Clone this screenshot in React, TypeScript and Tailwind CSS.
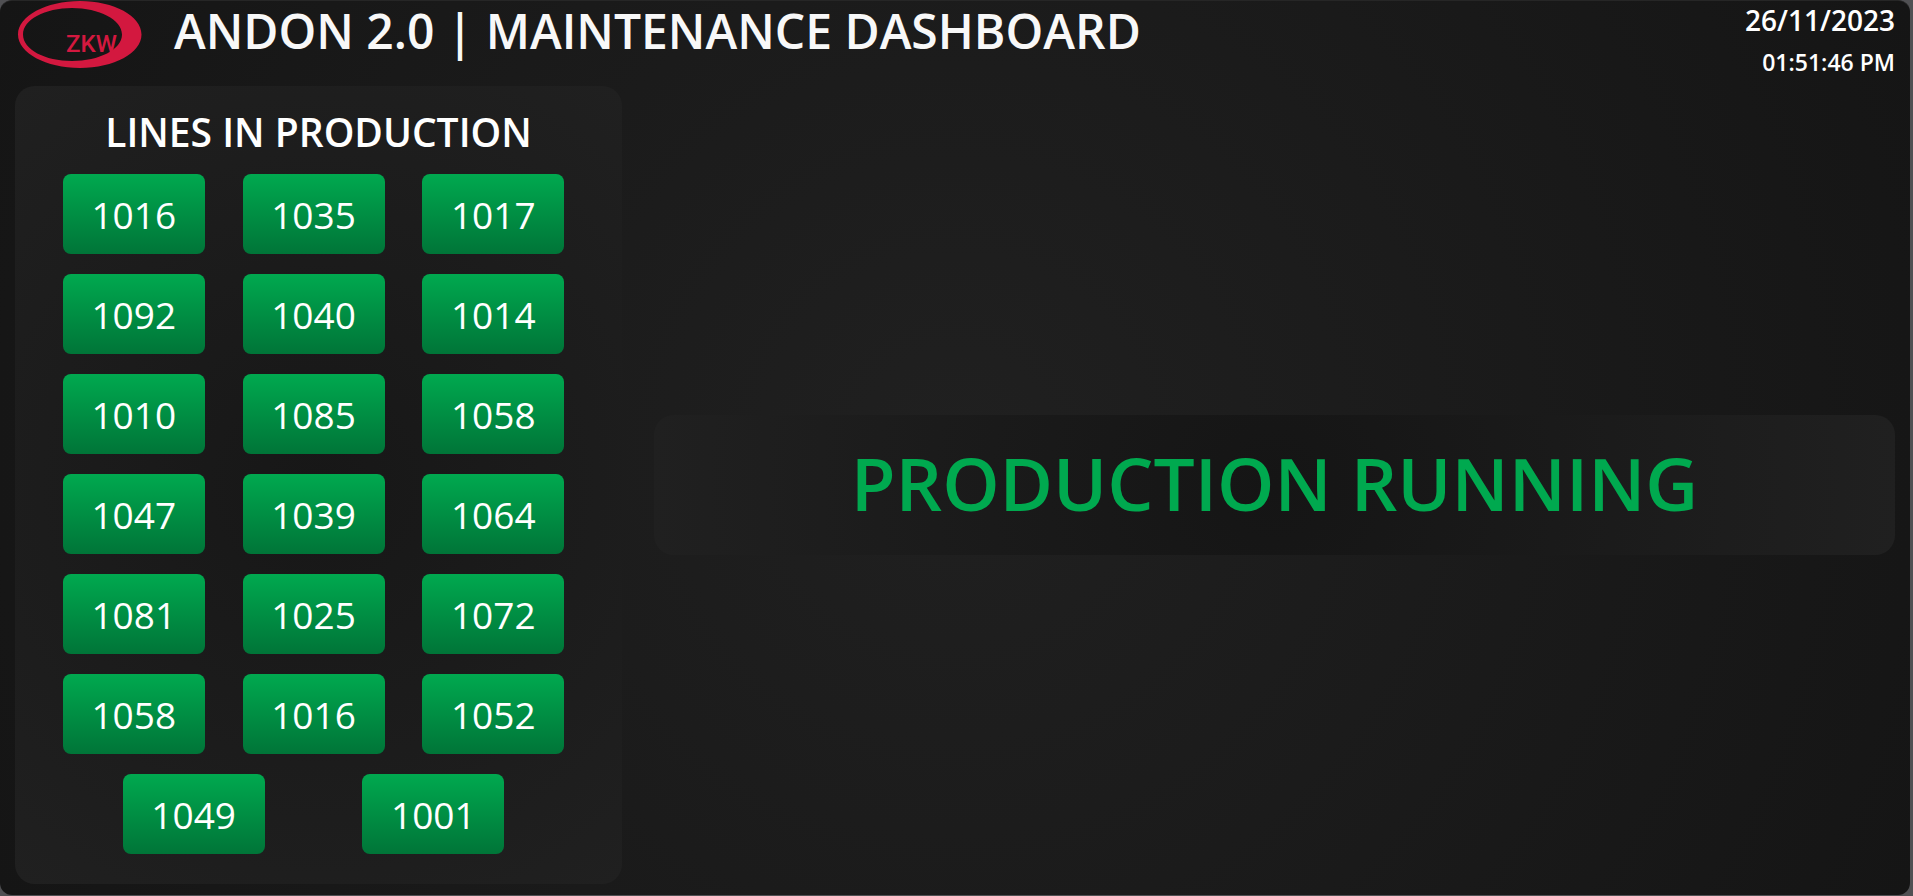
const LINES = [
  '1016', '1035', '1017',
  '1092', '1040', '1014',
  '1010', '1085', '1058',
  '1047', '1039', '1064',
  '1081', '1025', '1072',
  '1058', '1016', '1052',
  '1049', '1001',
];

function Logo() {
  return (
    <svg viewBox="0 0 124 68" className="h-[68px] w-[124px] shrink-0" role="img" aria-label="ZKW">
      <path
        fill="#d3183f"
        fillRule="evenodd"
        d="M62 0C96 0 123.500 15 123.500 33.500S96 67 62 67 0 52 0 33.500 28 0 62 0ZM54 7C27 7 5 18.500 5 33.500S27 60 54 60 104 48.500 104 33.500 81 7 54 7Z"
      />
      <text x="48" y="51" fill="#d3183f" fontFamily="Roboto, sans-serif" fontSize="24" fontWeight="500">
        ZKW
      </text>
    </svg>
  );
}

function LineCard({ id }: { id: string }) {
  return (
    <li className="mx-2.5 flex h-20 w-[142px] items-center justify-center rounded-lg bg-linear-to-b from-[#00a94f] to-[#007538] pt-0.5 text-[37px] text-white">
      {id}
    </li>
  );
}

export default function App() {
  return (
    <div className="min-h-screen bg-[#505053] pr-[3px] pb-px font-['Open_Sans','Noto_Sans',sans-serif] text-white">
      <div className="flex min-h-[calc(100vh-1px)] flex-col rounded-xl border-t border-[#262626] bg-[radial-gradient(circle,#202020,#151515)] pr-[15px] pb-[11px] pl-[15px]">
        <header className="flex h-[85px] items-start justify-between">
          <div className="flex items-start gap-8 pl-[3px]">
            <Logo />
            <h1 className="text-[48px] leading-[60px] font-semibold text-[#f8f8f8]">
              ANDON 2.0 | MAINTENANCE DASHBOARD
            </h1>
          </div>
          <div className="flex flex-col items-end font-semibold">
            <span className="text-[28px] leading-[38px]">26/11/2023</span>
            <time className="text-[23px] leading-[46px]">01:51:46 PM</time>
          </div>
        </header>
        <main className="flex flex-1 items-stretch gap-8">
          <section className="w-[607px] shrink-0 rounded-[20px] bg-[radial-gradient(circle,#171717,#202020)] px-5 pt-4 pb-[30px]">
            <h2 className="text-center text-[39px] leading-[60px] font-semibold">LINES IN PRODUCTION</h2>
            <ul className="mt-3 flex flex-wrap justify-evenly gap-y-5 pr-2.5">
              {LINES.map((id, i) => (
                <LineCard key={i} id={id} />
              ))}
            </ul>
          </section>
          <section className="flex flex-1 items-center">
            <p className="flex h-[140px] flex-1 items-center justify-center rounded-[20px] bg-[radial-gradient(circle,#151515,#202020)] pb-1 text-[73px] font-semibold text-[#00a94f]">
              PRODUCTION RUNNING
            </p>
          </section>
        </main>
      </div>
    </div>
  );
}
